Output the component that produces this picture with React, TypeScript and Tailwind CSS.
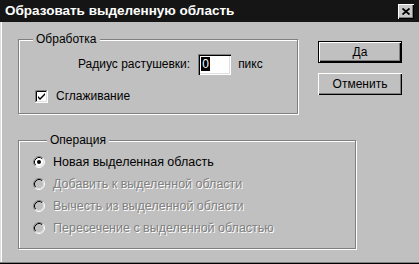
import React from 'react';

const font = { fontFamily: '"Liberation Sans", Arial, sans-serif' };

function Radio({ checked, disabled }: { checked?: boolean; disabled?: boolean }) {
  return (
    <svg width="12" height="12" viewBox="0 0 12 12" className="shrink-0">
      <circle cx="6" cy="6" r="5" fill={disabled ? '#c0c0c0' : '#ffffff'} />
      <path d="M2.11 9.89 A5.5 5.5 0 0 1 9.89 2.11" fill="none" stroke="#808080" strokeWidth="1" />
      <path d="M9.89 2.11 A5.5 5.5 0 0 1 2.11 9.89" fill="none" stroke="#ffffff" strokeWidth="1" />
      <path d="M2.82 9.18 A4.5 4.5 0 0 1 9.18 2.82" fill="none" stroke="#000000" strokeWidth="1" />
      <path d="M9.18 2.82 A4.5 4.5 0 0 1 2.82 9.18" fill="none" stroke="#dfdfdf" strokeWidth="1" />
      {checked && <circle cx="6" cy="6" r="2" fill="#000" />}
    </svg>
  );
}

function Check() {
  return (
    <svg width="13" height="13" viewBox="0 0 13 13" className="shrink-0">
      <rect x="0" y="0" width="13" height="13" fill="#fff" />
      <path d="M0.5 12.5 V0.5 H12.5" fill="none" stroke="#808080" />
      <path d="M1.5 11.5 V1.5 H11.5" fill="none" stroke="#000" />
      <path d="M0.5 12.5 H12.5 V0.5" fill="none" stroke="#fff" />
      <path d="M1.5 11.5 H11.5 V1.5" fill="none" stroke="#dfdfdf" />
      <path d="M3 6 L5 8 L10 3 V5 L5 10 L3 8 Z" fill="#000" />
    </svg>
  );
}

function Option({ label, checked, disabled }: { label: string; checked?: boolean; disabled?: boolean }) {
  return (
    <div className="flex h-[22px] items-center gap-[8px]">
      <Radio checked={checked} disabled={disabled} />
      <span
        className={
          disabled
            ? 'text-[12.5px] text-[#808080] [text-shadow:1px_1px_0_#fff]'
            : 'text-[12.5px] text-black'
        }
      >
        {label}
      </span>
    </div>
  );
}

export default function App() {
  return (
    <div className="flex h-[264px] w-[419px] flex-col bg-[#c0c0c0]" style={font}>
      <div className="flex h-[22px] shrink-0 items-center justify-between bg-[#151515] pl-[5px] pr-[5px]">
        <span className="text-[13.5px] font-bold text-white">Образовать выделенную область</span>
        <div className="flex h-[15px] w-[16px] items-center justify-center bg-[#c8c8c8] shadow-[inset_1px_1px_0_#fff,inset_-1px_-1px_0_#000,inset_-2px_-2px_0_#808080]">
          <svg width="8" height="7" viewBox="0 0 8 7">
            <path d="M0.5 0.5 L7.5 6.5 M7.5 0.5 L0.5 6.5" stroke="#000" strokeWidth="1.8" />
          </svg>
        </div>
      </div>

      <div className="flex flex-1 flex-col pl-[18px] pt-[10px] shadow-[inset_0_-1px_0_#000,inset_0_-2px_0_#808080,inset_1px_0_0_#dfdfdf,inset_2px_0_0_#fff]">
        <div className="flex">
          <fieldset className="flex h-[82px] w-[280px] flex-col border border-[#808080] shadow-[inset_1px_1px_0_#fff,1px_1px_0_#fff]">
            <legend className="ml-[14px] bg-[#c0c0c0] px-[3px] text-[12px] leading-[14px] text-black">
              Обработка
            </legend>
            <div className="mt-[7px] flex h-[22px] items-center pl-[59px]">
              <span className="text-[12px] text-black">Радиус растушевки:</span>
              <div className="ml-[8px] flex h-[21px] w-[33px] items-center bg-white pl-[3px] shadow-[inset_1px_1px_0_#808080,inset_2px_2px_0_#000,inset_-1px_-1px_0_#fff,inset_-2px_-2px_0_#dfdfdf]">
                <span className="bg-black px-[1px] text-[12px] leading-[14px] text-white">0</span>
              </div>
              <span className="ml-[7px] text-[12px] text-black">пикс</span>
            </div>
            <div className="mt-[12px] flex items-center gap-[8px] pl-[16px]">
              <Check />
              <span className="text-[12px] text-black">Сглаживание</span>
            </div>
          </fieldset>

          <div className="ml-[20px] mt-[9px] flex flex-col gap-[10px]">
            <button className="flex h-[22px] w-[84px] items-center justify-center border border-black bg-[#c0c0c0] text-[12px] text-black shadow-[inset_1px_1px_0_#fff,inset_-1px_-1px_0_#000,inset_-2px_-2px_0_#808080]">
              Да
            </button>
            <button className="flex h-[22px] w-[84px] items-center justify-center bg-[#c0c0c0] text-[12px] text-black shadow-[inset_1px_1px_0_#fff,inset_-1px_-1px_0_#000,inset_-2px_-2px_0_#808080]">
              Отменить
            </button>
          </div>
        </div>

        <fieldset className="mt-[19px] flex h-[116px] w-[338px] flex-col border border-[#808080] pl-[14px] shadow-[inset_1px_1px_0_#fff,1px_1px_0_#fff]">
          <legend className="ml-[14px] bg-[#c0c0c0] px-[3px] text-[12px] leading-[14px] text-black">
            Операция
          </legend>
          <div className="mt-[4px] flex flex-col">
            <Option label="Новая выделенная область" checked />
            <Option label="Добавить к выделенной области" disabled />
            <Option label="Вычесть из выделенной области" disabled />
            <Option label="Пересечение с выделенной областью" disabled />
          </div>
        </fieldset>
      </div>
    </div>
  );
}
